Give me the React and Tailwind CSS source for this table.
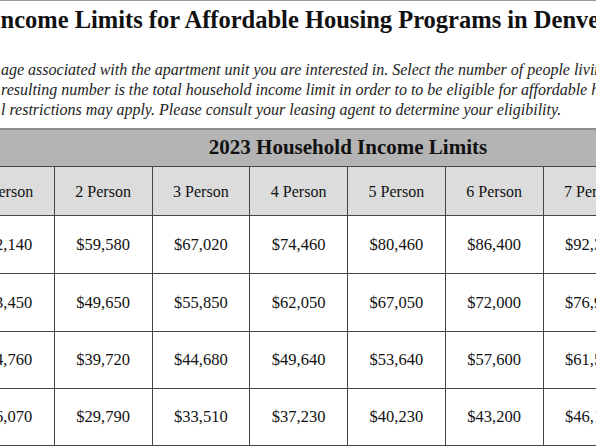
import React from "react";

const persons = ["1 Person", "2 Person", "3 Person", "4 Person", "5 Person", "6 Person", "7 Person", "8 Person"];

const rows = [
  ["$52,140", "$59,580", "$67,020", "$74,460", "$80,460", "$86,400", "$92,350", "$98,300"],
  ["$43,450", "$49,650", "$55,850", "$62,050", "$67,050", "$72,000", "$76,950", "$81,950"],
  ["$34,760", "$39,720", "$44,680", "$49,640", "$53,640", "$57,600", "$61,560", "$65,530"],
  ["$26,070", "$29,790", "$33,510", "$37,230", "$40,230", "$43,200", "$46,170", "$49,150"],
];

export default function App() {
  return (
    <div className="w-[596px] h-[446px] overflow-hidden bg-white text-[#111] font-['Georgia','Liberation_Serif',serif]">
      {/* title + intro */}
      <div className="border-t border-[#9a9a9a] pt-[4px] h-[128px]">
        <h1 className="ml-[-9px] whitespace-nowrap text-[24.5px] leading-[30px] font-bold">
          Income Limits for Affordable Housing Programs in Denver
        </h1>
        <div className="mt-[25px] ml-[1px] italic text-[16px] leading-[20px] text-[#222] whitespace-nowrap">
          <p>age associated with the apartment unit you are interested in. Select the number of people living</p>
          <p>resulting number is the total household income limit in order to to be eligible for affordable housing</p>
          <p>l restrictions may apply. Please consult your leasing agent to determine your eligibility.</p>
        </div>
      </div>

      {/* table */}
      <div className="border-t-2 border-[#8c8c8c] ml-[-43px] w-[782px]">
        <div className="h-[37px] bg-[#b4b4b4] border-b border-[#444] flex items-center justify-center text-[21px] font-bold">
          2023 Household Income Limits
        </div>
        <div className="grid grid-cols-[repeat(8,97.75px)]">
          {persons.map((p) => (
            <div
              key={p}
              className="h-[49px] bg-[#dcdcdc] border-r border-b border-[#444] flex items-center justify-center text-[16px] pt-[1px]"
            >
              {p}
            </div>
          ))}
          {rows.map((row, i) =>
            row.map((v, j) => (
              <div
                key={i + "-" + j}
                className={`${i < 2 ? "h-[58px]" : "h-[57px]"} border-r border-b border-[#444] flex items-center justify-center text-[16.5px] pt-[1px]`}
              >
                {v}
              </div>
            ))
          )}
        </div>
      </div>
    </div>
  );
}
